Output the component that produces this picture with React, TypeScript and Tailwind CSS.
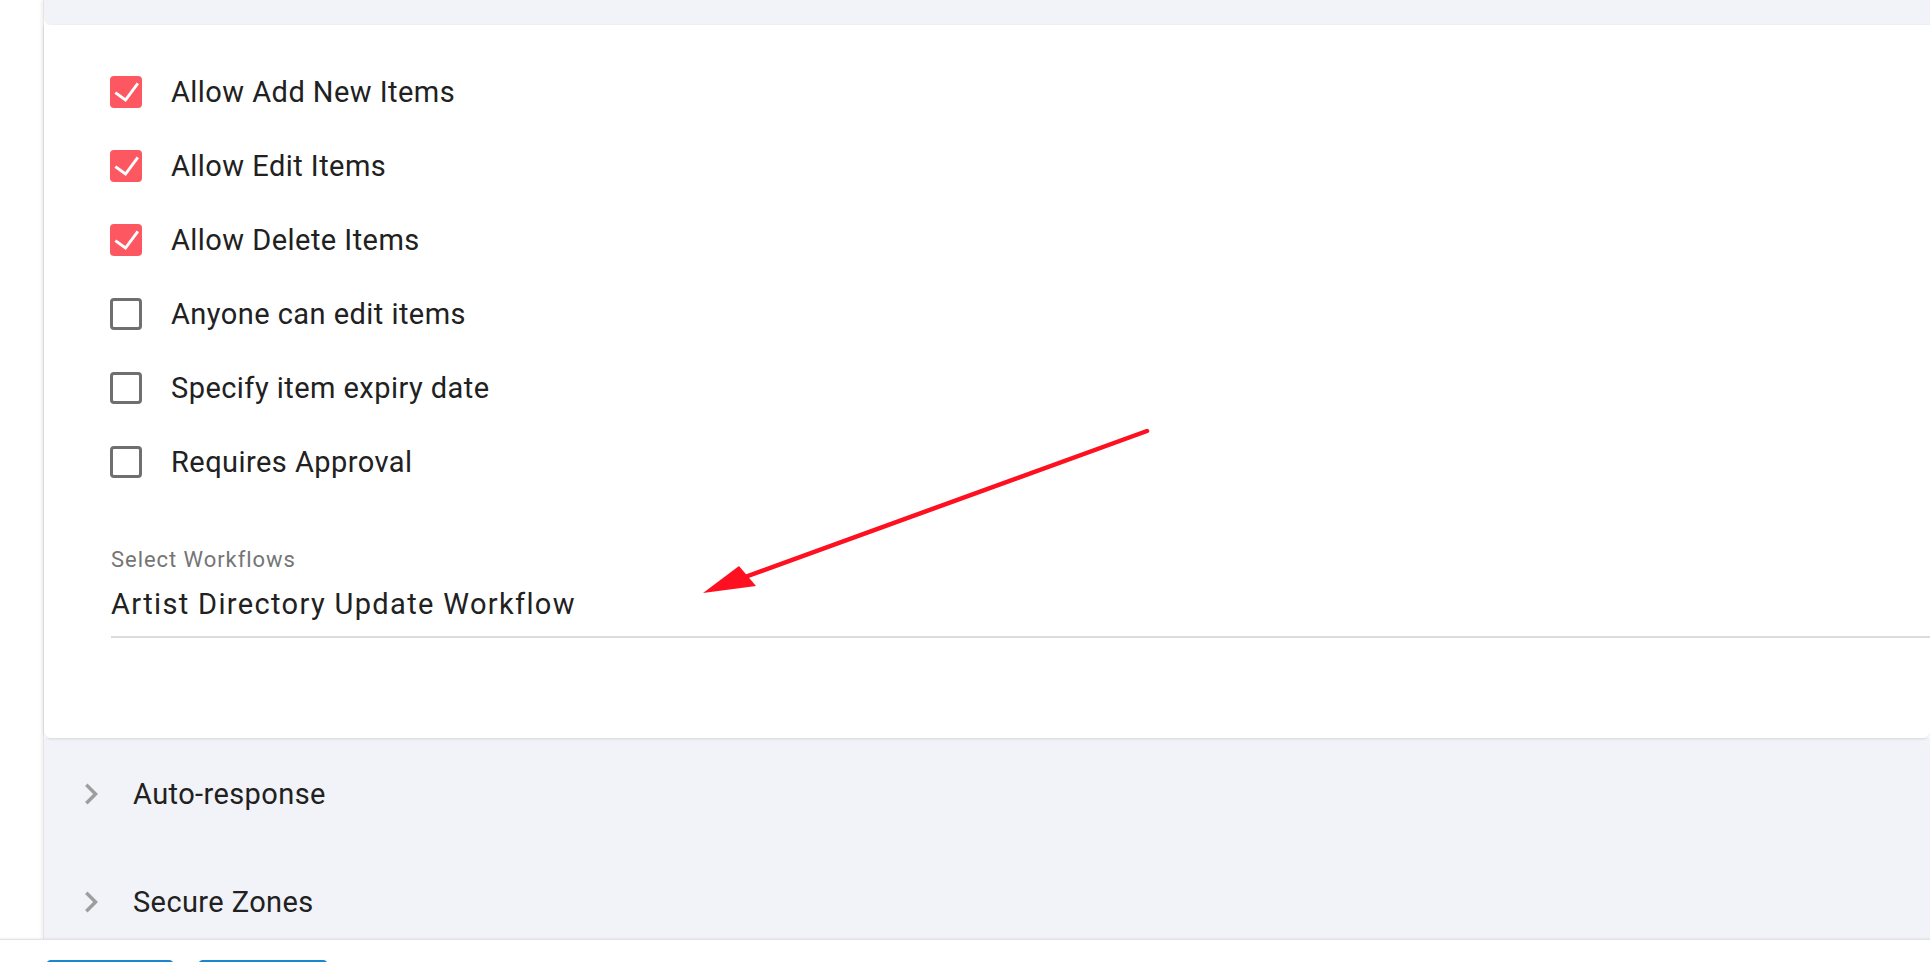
import React from "react";

const font = { fontFamily: "Roboto, 'Noto Sans', Arial, sans-serif" };

function CheckedBox() {
  return (
    <div className="w-[32px] h-[32px] rounded-[4px] bg-[#fd5761] flex items-center justify-center shrink-0">
      <svg width="32" height="32" viewBox="0 0 32 32">
        <path d="M6.5 17.5 L15.5 24 L27 8.5" fill="none" stroke="#ffffff" strokeWidth="2.9" strokeLinecap="square" strokeLinejoin="miter" />
      </svg>
    </div>
  );
}

function UncheckedBox() {
  return <div className="w-[32px] h-[32px] rounded-[4px] border-[3.5px] border-[#6f6f6f] shrink-0" />;
}

function Row({ checked, label }: { checked: boolean; label: string }) {
  return (
    <div className="h-[74px] flex items-center pl-[66px]">
      {checked ? <CheckedBox /> : <UncheckedBox />}
      <span className="ml-[29px] text-[29px] leading-[40px] tracking-[0.45px] text-[#212121]">{label}</span>
    </div>
  );
}

function Chevron() {
  return (
    <svg width="42" height="42" viewBox="0 0 24 24" className="shrink-0">
      <path d="M10 6 8.59 7.41 13.17 12l-4.58 4.59L10 18l6-6z" fill="#9e9e9e" />
    </svg>
  );
}

function AccRow({ label }: { label: string }) {
  return (
    <div className="h-[108px] flex items-center pl-[26px]">
      <Chevron />
      <span className="ml-[21px] text-[29px] leading-[40px] tracking-[0.4px] text-[#212121]">{label}</span>
    </div>
  );
}

export default function App() {
  const rows = [
    { checked: true, label: "Allow Add New Items" },
    { checked: true, label: "Allow Edit Items" },
    { checked: true, label: "Allow Delete Items" },
    { checked: false, label: "Anyone can edit items" },
    { checked: false, label: "Specify item expiry date" },
    { checked: false, label: "Requires Approval" },
  ];
  return (
    <div className="relative w-[1930px] h-[962px] overflow-hidden bg-white flex flex-col" style={font}>
      <div className="flex-1 min-h-0 overflow-hidden pl-[43px] bg-white">
        <div className="h-full border-l border-[#e4e4e4] shadow-[-2px_0_3px_rgba(0,0,0,0.06)] flex flex-col">
          <div className="h-[25px] bg-[#f2f3f8] rounded-bl-[7px] shrink-0" />
          <div className="h-[713px] shrink-0 bg-white rounded-b-[7px] shadow-[0_1px_3px_rgba(0,0,0,0.12)] pt-[30px] relative z-10">
            {rows.map((r) => (
              <Row key={r.label} checked={r.checked} label={r.label} />
            ))}
            <div className="ml-[67px] mt-[49px]">
              <div className="text-[22px] leading-[24px] tracking-[0.95px] text-[#757575]">Select Workflows</div>
              <div className="mt-[11.5px] text-[29px] leading-[40px] tracking-[1.35px] text-[#212121] pb-[12.5px] border-b-2 border-[#dcdcdc]">
                Artist Directory Update Workflow
              </div>
            </div>
          </div>
          <div className="flex-1 bg-[#f2f3f8] pt-[2px]">
            <AccRow label="Auto-response" />
            <AccRow label="Secure Zones" />
          </div>
        </div>
      </div>
      <div className="h-[23px] shrink-0 bg-white border-t border-[#e2e2e2] shadow-[0_-1px_2px_rgba(0,0,0,0.05)] relative z-20 flex items-start pt-[20px] pl-[46px] gap-[24px]">
        <div className="w-[128px] h-[20px] rounded-[5px] bg-[#1a86d0]" />
        <div className="w-[130px] h-[20px] rounded-[5px] bg-[#1a86d0]" />
      </div>
      <svg className="absolute left-0 top-0 pointer-events-none z-30" width="1930" height="962">
        <line x1="1147" y1="431" x2="745" y2="577" stroke="#fe1020" strokeWidth="4.5" strokeLinecap="round" />
        <polygon points="703,593 739,566 756,586" fill="#fe1020" />
      </svg>
    </div>
  );
}
